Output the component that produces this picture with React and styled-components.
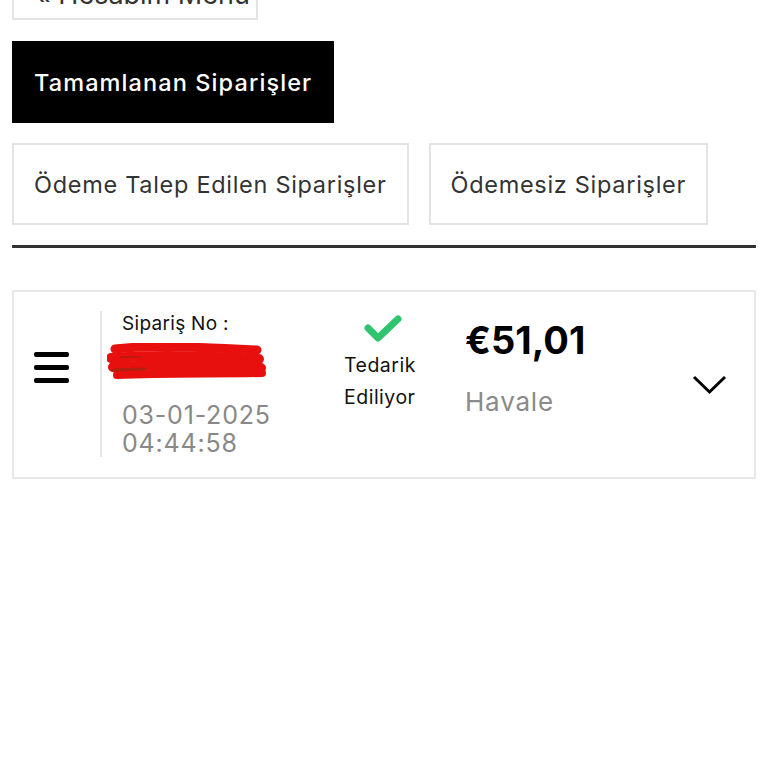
import styled, { createGlobalStyle } from "styled-components";

const Global = createGlobalStyle`
  html, body {
    margin: 0;
    background: #fff;
    font-family: Inter, "Noto Sans", sans-serif;
    overflow: hidden;
  }
`;

const Page = styled.div`
  padding: 0 12px;
  margin-top: -30px;
`;

const BackButton = styled.div`
  box-sizing: border-box;
  width: 246px;
  height: 50px;
  padding: 6px 0 0 21px;
  border: 2px solid #e3e3e3;
  font-size: 27px;
  color: #333;
  white-space: nowrap;
  overflow: hidden;
`;

const TabGroup = styled.div`
  display: flex;
  gap: 20px;
  margin-top: ${(p) => p.$top}px;
`;

const Tab = styled.div`
  box-sizing: border-box;
  height: 82px;
  padding: 0 20px;
  display: flex;
  align-items: center;
  font-size: 23.5px;
  font-weight: ${(p) => (p.$active ? 500 : 400)};
  letter-spacing: ${(p) => (p.$active ? 1.1 : 0.7)}px;
  color: ${(p) => (p.$active ? "#fff" : "#333")};
  background: ${(p) => (p.$active ? "#000" : "#fff")};
  border: 2px solid ${(p) => (p.$active ? "#000" : "#e3e3e3")};
`;

const Divider = styled.div`
  height: 3px;
  background: #333;
  margin-top: 20px;
`;

const Card = styled.div`
  margin-top: 42px;
  box-sizing: border-box;
  width: 744px;
  border: 2px solid #e8e8e8;
  padding: 19px 0 20px;
  display: flex;
  align-items: flex-start;
`;

const MenuCell = styled.div`
  width: 86px;
  padding: 41px 0 0 20px;
  box-sizing: border-box;
`;

const Bars = styled.div`
  width: 35px;
  height: 31px;
  display: flex;
  flex-direction: column;
  justify-content: space-between;
  span {
    height: 5px;
    border-radius: 2px;
    background: #000;
  }
`;

const Info = styled.div`
  width: 244px;
  height: 146px;
  box-sizing: border-box;
  border-left: 2px solid #e6e6e6;
  padding-left: 20px;
`;

const Label = styled.div`
  font-size: 19px;
  line-height: 26px;
  letter-spacing: 0.3px;
  color: #111;
`;

const Scribble = styled.svg`
  display: block;
  margin: 6px 0 0 -15px;
`;

const DateText = styled.div`
  margin-top: 20px;
  font-size: 25px;
  line-height: 28px;
  letter-spacing: 0.8px;
  color: #888;
`;

const Status = styled.div`
  width: 72px;
  display: flex;
  flex-direction: column;
  padding-top: 4px;
  font-size: 19.5px;
  line-height: 32px;
  letter-spacing: 0.5px;
  color: #111;
  svg {
    align-self: center;
    margin: 0 0 6px 6px;
  }
`;

const Amount = styled.div`
  margin-left: 49px;
  padding-top: 6px;
`;

const Price = styled.div`
  font-size: 38px;
  line-height: 46px;
  font-weight: 700;
  color: #000;
`;

const Method = styled.div`
  margin-top: 24px;
  font-size: 26px;
  line-height: 30px;
  letter-spacing: 0.8px;
  color: #8a8a8a;
`;

const Toggle = styled.div`
  margin-left: auto;
  margin-right: 27px;
  align-self: center;
  display: flex;
`;

export default function App() {
  return (
    <>
      <Global />
      <Page>
        <BackButton>«&nbsp;Hesabım Menü</BackButton>
        <TabGroup $top={21}>
          <Tab $active>Tamamlanan Siparişler</Tab>
        </TabGroup>
        <TabGroup $top={20}>
          <Tab>Ödeme Talep Edilen Siparişler</Tab>
          <Tab>Ödemesiz Siparişler</Tab>
        </TabGroup>
        <Divider />
        <Card>
          <MenuCell>
            <Bars>
              <span />
              <span />
              <span />
            </Bars>
          </MenuCell>
          <Info>
            <Label>Sipariş No :</Label>
            <Scribble width="160" height="38" viewBox="0 0 160 38">
              <g stroke="#e8100f" strokeLinecap="round" fill="none">
                <path d="M8 6 C40 2 90 4 150 7" strokeWidth="9" />
                <path d="M4 15 C50 11 100 13 152 16" strokeWidth="10" />
                <path d="M6 24 C50 22 100 22 154 25" strokeWidth="10" />
                <path d="M10 32 C60 30 110 31 155 30" strokeWidth="8" />
              </g>
              <path d="M6 27 L38 26" stroke="#b4200f" strokeWidth="3" strokeLinecap="round" />
              <path d="M14 14 L34 14" stroke="#c01a10" strokeWidth="2" strokeLinecap="round" />
            </Scribble>
            <DateText>
              03-01-2025
              <br />
              04:44:58
            </DateText>
          </Info>
          <Status>
            <svg width="40" height="28" viewBox="0 0 40 28">
              <path
                d="M5 13 L15 23 L35 4"
                stroke="#2fc56f"
                strokeWidth="7"
                strokeLinecap="round"
                strokeLinejoin="round"
                fill="none"
              />
            </svg>
            <span>Tedarik</span>
            <span>Ediliyor</span>
          </Status>
          <Amount>
            <Price>€51,01</Price>
            <Method>Havale</Method>
          </Amount>
          <Toggle>
            <svg width="35" height="21" viewBox="0 0 35 21">
              <path
                d="M2 3 L17.5 18 L33 3"
                stroke="#000"
                strokeWidth="3"
                fill="none"
              />
            </svg>
          </Toggle>
        </Card>
      </Page>
    </>
  );
}
